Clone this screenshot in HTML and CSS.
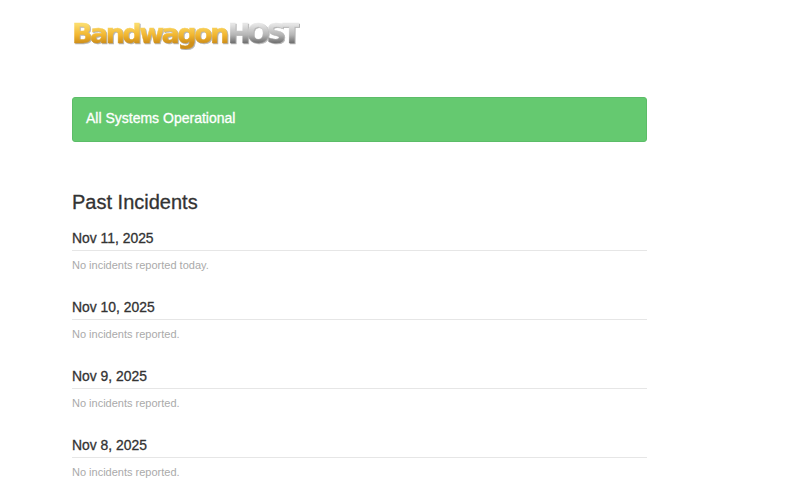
FILE: index.html
```html
<!DOCTYPE html>
<html lang="en">
<head>
<meta charset="utf-8">
<title>BandwagonHOST Status</title>
<link rel="stylesheet" href="styles.css">
</head>
<body>
<main class="container">
  <header class="logo"><span class="logo-gold">Bandwagon</span><span class="logo-grey">HOST</span></header>
  <div class="status">All Systems Operational</div>
  <h2 class="past">Past Incidents</h2>
  <section class="day">
    <h3 class="date">Nov 11, 2025</h3>
    <p class="note">No incidents reported today.</p>
  </section>
  <section class="day">
    <h3 class="date">Nov 10, 2025</h3>
    <p class="note">No incidents reported.</p>
  </section>
  <section class="day">
    <h3 class="date">Nov 9, 2025</h3>
    <p class="note">No incidents reported.</p>
  </section>
  <section class="day">
    <h3 class="date">Nov 8, 2025</h3>
    <p class="note">No incidents reported.</p>
  </section>
</main>
</body>
</html>
```
FILE: styles.css
```css
html, body { margin: 0; padding: 0; background: #fff; height: 499px; overflow: hidden; }
body { font-family: "Liberation Sans", Arial, sans-serif; color: #333; }
.container { width: 575px; margin-left: 72px; }
.logo {
  display: flex; height: 28px; margin-top: 19px; padding: 0;
  align-items: center; white-space: nowrap;
  font-family: "DejaVu Sans", sans-serif; font-weight: 700; font-size: 27px;
  filter: blur(0.4px) drop-shadow(1px 1px 0.5px rgba(0,0,0,.3));
}
.logo-gold, .logo-grey {
  -webkit-background-clip: text; background-clip: text; color: transparent;
  -webkit-text-stroke: .5px transparent; padding: 0 1px;
}
.logo-gold {
  letter-spacing: -2.55px; margin-left: -1px;
  background-image: linear-gradient(#fbdc6c 20%, #f2b62f 55%, #d0901a 80%);
}
.logo-grey {
  letter-spacing: -3.4px; margin-left: -1px;
  background-image: linear-gradient(#e6e6e6 20%, #b4b4b4 55%, #707070 80%);
}
.status {
  margin-top: 50px; height: 45px; box-sizing: border-box; padding: 12px 13px;
  background: #65c970; border: 1px solid #5cbd68; border-radius: 3px;
  color: #fff; font-size: 14px; line-height: 17px; font-weight: 400; -webkit-text-stroke: .3px #fff;
}
.past { margin: 48px 0 0; font-size: 20px; line-height: 24px; font-weight: 400; -webkit-text-stroke: .3px #333; }
.day { height: 69px; }
.date {
  margin: 0; padding-bottom: 3px; height: 17px;
  border-bottom: 1px solid #e6e6e6;
  font-size: 13.9px; line-height: 17px; font-weight: 400; -webkit-text-stroke: .3px #333;
}
.day:first-of-type { margin-top: 16px; }
.note { margin: 7px 0 0; font-size: 11px; line-height: 14px; color: #aaa; }
```
